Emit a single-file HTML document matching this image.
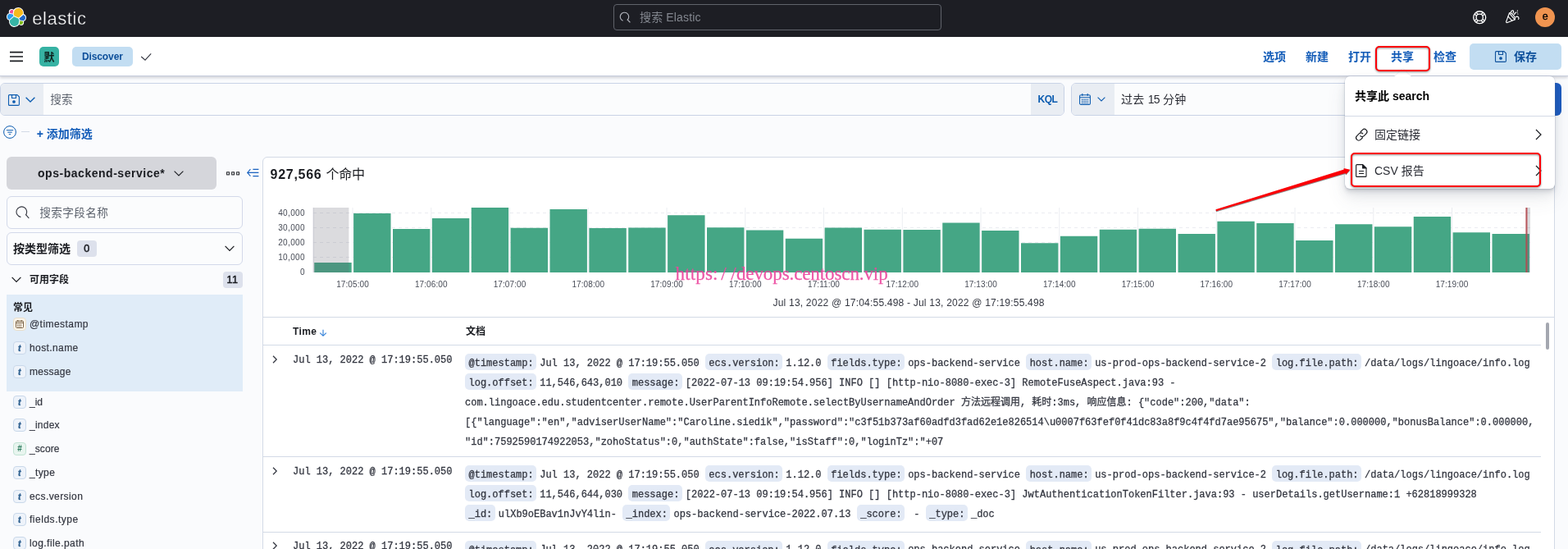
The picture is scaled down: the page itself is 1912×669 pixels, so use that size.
<!DOCTYPE html>
<html lang="zh-CN"><head><meta charset="utf-8"><title>Discover - Elastic</title>
<style>
*{box-sizing:border-box;margin:0;padding:0}
html,body{width:1912px;height:669px;overflow:hidden;background:#fafbfd;font-family:"Liberation Sans","Noto Sans CJK SC",sans-serif;color:#343741;font-size:14px}
#root{will-change:transform;position:relative;width:1912px;height:669px;overflow:hidden;background:#fafbfd}
.abs{position:absolute}
.t{position:absolute;white-space:nowrap;line-height:1}
.b{font-weight:700}
svg{position:absolute;overflow:visible}
#hdr1{left:0;top:0;width:1912px;height:45px;background:#1d1e24}
#hdr2{left:0;top:44.5px;width:1912px;height:48px;background:#fff;border-bottom:1px solid #c6ccdb;box-shadow:0 2px 3px rgba(110,115,130,.28)}
.nav{color:#135cb8;font-weight:700;font-size:14px;top:62px}
.fld{font-size:12px;color:#343741;left:36px;-webkit-text-stroke:.2px #343741}
.tok{position:absolute;left:16px;width:16px;height:16px;border-radius:4px;border:1px solid #c9d8ea;background:#eef3fa;color:#2d5f8f;font:italic 700 10.500px/14.300px "Liberation Sans",sans-serif;text-align:center;text-indent:-.5px;-webkit-text-stroke:.3px #2d5f8f}
.doc{position:absolute;left:567px;-webkit-text-stroke:.28px #343741;font:12px/24px "Liberation Mono","Noto Sans CJK SC",monospace;color:#343741;white-space:pre}
.doc b{font-weight:400;background:#e3eaf6;padding:4.700px 3.500px 1.200px 4.500px;margin-right:4px;border-radius:5px}
.rt{position:absolute;left:357px;-webkit-text-stroke:.28px #343741;font:12px/24px "Liberation Mono","Noto Sans CJK SC",monospace;color:#343741;white-space:pre}
.hl{position:absolute;height:1px;background:#d3dae6}
.ax{font-size:10px;color:#484c57;letter-spacing:.1px}
.ay{letter-spacing:.38px}
.red{position:absolute;border:2.200px solid #fb0007;border-radius:5px;filter:drop-shadow(.8px 1.300px 1px rgba(0,0,0,.45))}
</style></head>
<body><div id="root">
<div id="hdr1" class="abs">
  <svg style="left:8px;top:9px" width="24" height="24" viewBox="0 0 32 32">
    <path fill="#FFF" d="M32 16.77a6.334 6.334 0 0 0-4.188-5.965 9.1 9.1 0 0 0 .161-1.71c0-5.027-4.09-9.095-9.095-9.095a9.066 9.066 0 0 0-7.365 3.758 4.828 4.828 0 0 0-2.957-1.009 4.833 4.833 0 0 0-4.828 4.828c0 .571.104 1.13.284 1.648A6.361 6.361 0 0 0 0 15.169c0 2.68 1.667 5.027 4.188 5.965-.102.56-.16 1.13-.16 1.71 0 5.005 4.067 9.073 9.072 9.073a9.044 9.044 0 0 0 7.365-3.77 4.786 4.786 0 0 0 2.957 1.021 4.833 4.833 0 0 0 4.828-4.828c0-.571-.104-1.13-.284-1.648A6.35 6.35 0 0 0 32 16.77"/>
    <path fill="#f7ba1c" d="M12.58 13.787l7.002 3.211 7.066-6.213a7.849 7.849 0 0 0 .152-1.557c0-4.287-3.487-7.775-7.775-7.775a7.769 7.769 0 0 0-6.415 3.394l-1.177 6.1 1.147 2.84z"/>
    <path fill="#36b3a5" d="M5.332 21.164a7.97 7.97 0 0 0-.15 1.58c0 4.3 3.497 7.797 7.798 7.797a7.772 7.772 0 0 0 6.435-3.412l1.166-6.076-1.557-2.975-7.029-3.203-6.663 6.289z"/>
    <path fill="#ee4d96" d="M5.288 9.067l4.8 1.134L11.14 4.74a3.785 3.785 0 0 0-2.287-.773 3.805 3.805 0 0 0-3.565 5.1"/>
    <path fill="#2f9ff0" d="M4.872 10.21c-2.136.707-3.63 2.756-3.63 5.016a5.263 5.263 0 0 0 3.392 4.923l6.734-6.087-1.237-2.641-5.26-1.211z"/>
    <path fill="#7fbb1d" d="M20.874 27.129a3.78 3.78 0 0 0 2.279.777 3.805 3.805 0 0 0 3.567-5.1l-4.797-1.123-1.05 5.446z"/>
    <path fill="#1f66c8" d="M21.85 20.563l5.28 1.234c2.145-.708 3.63-2.756 3.63-5.019a5.25 5.25 0 0 0-3.4-4.912l-6.906 6.05 1.395 2.647z"/>
  </svg>
  <div class="t" id="wordmark" style="left:39.300px;top:11.500px;font-size:22px;color:#fff;letter-spacing:.55px;-webkit-text-stroke:.35px #1d1e24">elastic</div>
  <div class="abs" style="left:748px;top:5px;width:400px;height:32px;border:1px solid #60636b;border-radius:4px;background:#1d1e24"></div>
  <svg style="left:755px;top:14px" width="14" height="14" viewBox="0 0 14 14" fill="none" stroke="#b4b7bf" stroke-width="1.100" stroke-linecap="round"><path d="M10.200 10.100A5.200 5.200 0 1 0 4.200 11.100"/><path d="M10.200 10.100L13.100 13"/></svg>
  <div class="t" style="left:780px;top:14px;font-size:14px;color:#83878f;letter-spacing:.15px">搜索 Elastic</div>
  <svg style="left:1795.800px;top:12.700px" width="16.400" height="16.400" viewBox="0 0 16 16" fill="none" stroke="#fff" stroke-width="1.300"><circle cx="8" cy="8" r="7.300"/><circle cx="8" cy="8" r="4"/><path d="M9.900 11.700l2.300 2.300M11.700 9.900l2.300 2.300M6.100 11.700l-2.300 2.300M4.300 9.900l-2.300 2.300M9.900 4.300l2.300-2.300M11.700 6.100l2.300-2.300M6.100 4.300l-2.300-2.300M4.300 6.100l-2.300-2.300"/></svg>
  <svg style="left:1835.800px;top:12.400px" width="16.400" height="16.400" viewBox="0 0 16 16" fill="none" stroke="#fff" stroke-width="1.150" stroke-linejoin="round" stroke-linecap="round"><path d="M4.400 3.800L.7 13.800c-.3.900.4 1.600 1.300 1.300l8.700-3.400"/><path d="M4.400 3.800c1.200-.7 3.200.6 4.800 2.600s2.400 4.300 1.500 5.300"/><path d="M2.900 8l4.800 4.800M5 4.800l5.200 6"/><path d="M6.300 2.800c.2-1.400 1.300-2.300 2.300-2s1 1.700.2 3"/><path d="M11.800 8.700c1.100-.9 2.600-.9 3.300-.1s.6 1.900.1 2.500"/><path d="M10.300 5.300l1.600-2.200" stroke-width="1.300"/><path d="M14 .9v.2M13.600 3.100h.2M14.500 5h.1" stroke-width="1.100"/></svg>
  <div class="abs" style="left:1871.800px;top:8.800px;width:24.400px;height:24.400px;border-radius:50%;background:#f09450"></div>
  <div class="t" style="left:1880.700px;top:14.200px;font-size:12.500px;color:#000;-webkit-text-stroke:.35px #000">e</div>
</div>
<div id="hdr2" class="abs"></div>
<svg style="left:12px;top:62px" width="16" height="14" viewBox="0 0 16 14" stroke="#1a1c21" stroke-width="1.700" fill="none"><path d="M0 1.600h16M0 7h16M0 12.400h16"/></svg>
<div class="abs" style="left:48px;top:57px;width:24px;height:24px;border-radius:5px;background:#36b2a3"></div>
<div class="t b" style="left:53.500px;top:62.500px;font-size:13px;color:#0d1f1c">默</div>
<div class="abs" style="left:88px;top:57px;width:74px;height:24px;border-radius:5px;background:#c2ddf2"></div>
<div class="t b" id="discover" style="left:100px;top:63px;font-size:12px;color:#0d4f9a;letter-spacing:-.12px">Discover</div>
<svg style="left:171px;top:63px" width="14" height="12" viewBox="0 0 14 12" fill="none" stroke="#343741" stroke-width="1.1"><path d="M1.200 6L6 10.200 13.200 2.300"/></svg>
<div class="t nav" style="left:1540px">选项</div>
<div class="t nav" style="left:1592px">新建</div>
<div class="t nav" style="left:1644px">打开</div>
<div class="t nav" style="left:1696px">共享</div>
<div class="t nav" style="left:1748px">检查</div>
<div class="abs" style="left:1792px;top:53px;width:112px;height:32px;border-radius:5px;background:#c2ddf2"></div>
<svg style="left:1823px;top:62px" width="14" height="14" viewBox="0 0 14 14" fill="none" stroke="#0f519c" stroke-width="1.1" stroke-linejoin="round"><path d="M1.500.600h9.500l2.400 2.400v9.200a1.200 1.200 0 0 1-1.200 1.200h-10.700a1 1 0 0 1-1-1v-10.800a1 1 0 0 1 1-1z"/><path d="M4.500.800v3.700h5v-3.700"/><circle cx="7" cy="9" r="1.300" fill="#0c5cb0"/></svg>
<div class="t nav" style="left:1846px;color:#0f519c">保存</div>

<div class="abs" style="left:0;top:101px;width:1298px;height:40px;border:1px solid #c9d3e6;border-radius:6px;background:#fbfcfd;overflow:hidden">
  <div class="abs" style="left:0;top:0;width:51.800px;height:38px;background:#e9edf3"></div>
  <div class="abs" style="right:0;top:0;width:39.800px;height:38px;background:#e9edf3"></div>
</div>
<svg style="left:10px;top:115px" width="14" height="14" viewBox="0 0 14 14" fill="none" stroke="#0c5cb0" stroke-width="1.1" stroke-linejoin="round"><path d="M1.500.600h9.500l2.400 2.400v9.200a1.200 1.200 0 0 1-1.200 1.200h-10.700a1 1 0 0 1-1-1v-10.800a1 1 0 0 1 1-1z"/><path d="M4.500.800v3.700h5v-3.700"/><circle cx="7" cy="9" r="1.300" fill="#0c5cb0"/></svg>
<svg style="left:31px;top:118px" width="12" height="7" viewBox="0 0 12 7" fill="none" stroke="#0c5cb0" stroke-width="1.300"><path d="M.600.800L6 6l5.400-5.200"/></svg>
<div class="t" style="left:61.300px;top:114.700px;font-size:13.600px;color:#5d636e">搜索</div>
<div class="t b" style="left:1265.500px;top:115px;font-size:12px;color:#0c5cb0;letter-spacing:-.5px">KQL</div>
<div class="abs" style="left:1306px;top:101px;width:580px;height:40px;border:1px solid #c9d3e6;border-radius:6px;background:#fbfcfd;overflow:hidden">
  <div class="abs" style="left:0;top:0;width:52px;height:38px;background:#e9edf3"></div>
</div>
<svg style="left:1316px;top:114px" width="14" height="14" viewBox="0 0 14 14" fill="none" stroke="#0c5cb0" stroke-width="1.1"><rect x=".6" y="1.800" width="12.800" height="11.600" rx="1.500"/><path d="M.6 4.800h12.800M3.800 0v3M10.200 0v3"/><path d="M3 7.300h8M3 9.300h8M3 11.300h8" stroke-dasharray="1.300 1" stroke-width="1.200"/></svg>
<svg style="left:1338px;top:118px" width="10" height="6" viewBox="0 0 10 6" fill="none" stroke="#0c5cb0" stroke-width="1.1"><path d="M.600.700L5 5l4.400-4.300"/></svg>
<div class="t" style="left:1367px;top:114px;font-size:14px;color:#2a2c34;letter-spacing:.25px">过去 <span style="letter-spacing:-.7px">15</span> 分钟</div>
<div class="abs" style="left:1880px;top:101px;width:24px;height:40px;border-radius:6px;background:#1d5bbf"></div>
<svg style="left:4px;top:153px" width="16" height="16" viewBox="0 0 16 16" fill="none" stroke="#0c5cb0" stroke-width="1"><circle cx="8" cy="8" r="7.400"/><path d="M3.800 5.700h8.400M5.300 8.200h5.400M6.800 10.700h2.400"/></svg>
<div class="abs" style="left:26px;top:160px;width:10px;height:1px;background:#d3dae6"></div>
<div class="t b" style="left:44.800px;top:156px;font-size:14px;color:#135cb8">+ 添加筛选</div>

<div class="abs" style="left:8px;top:191px;width:256px;height:40px;border-radius:6px;background:#d5d6db"></div>
<div class="t b" id="ipat" style="left:46px;top:204px;font-size:14px;color:#1a1c21;letter-spacing:.53px">ops-backend-service*</div>
<svg style="left:212px;top:208px" width="12" height="7" viewBox="0 0 12 7" fill="none" stroke="#1a1c21" stroke-width="1.1"><path d="M.600.700L6 6l5.400-5.300"/></svg>
<svg style="left:276px;top:208.500px" width="16" height="5" viewBox="0 0 16 5" fill="none" stroke="#1a1c21" stroke-width="1"><rect x=".6" y=".8" width="2.800" height="3.100"/><rect x="6.700" y=".8" width="2.800" height="3.100"/><rect x="12.700" y=".8" width="2.800" height="3.100"/></svg>
<svg style="left:301px;top:205px" width="15" height="11" viewBox="0 0 15 11" fill="none" stroke="#1a62c0" stroke-width="1.100"><path d="M4.400 1.200L.7 5.400l3.700 4.200M.8 5.400h13.600M7.400 1.400h7M7.400 9.600h7"/></svg>
<div class="abs" style="left:8px;top:239px;width:288px;height:40px;border:1px solid #d3d9ea;border-radius:6px;background:#fbfcfd"></div>
<svg style="left:20px;top:251px" width="16" height="16" viewBox="0 0 16 16" fill="none" stroke="#343741" stroke-width="1.1" stroke-linecap="round"><path d="M11.600 10.700A6.300 6.300 0 1 0 5 13.400"/><path d="M11.600 10.700L15 14.600"/></svg>
<div class="t" style="left:48.300px;top:253px;font-size:13.600px;color:#5d636e;letter-spacing:.4px">搜索字段名称</div>
<div class="abs" style="left:8px;top:283px;width:288px;height:40px;border:1px solid #d3d9ea;border-radius:6px;background:#fbfcfd"></div>
<div class="t b" style="left:16px;top:296px;font-size:14px;color:#1a1c21">按类型筛选</div>
<div class="abs" style="left:94px;top:293px;width:24px;height:20px;border-radius:4px;background:#dde1ec"></div>
<div class="t" style="left:102.200px;top:296.800px;font-size:12.500px;color:#1a1c21;-webkit-text-stroke:.5px #1a1c21">0</div>
<svg style="left:274px;top:299px" width="12" height="8" viewBox="0 0 12 8" fill="none" stroke="#1a1c21" stroke-width="1.200"><path d="M.600.900L6 6.400l5.400-5.500"/></svg>
<svg style="left:14px;top:337px" width="12" height="8" viewBox="0 0 12 8" fill="none" stroke="#1a1c21" stroke-width="1.200"><path d="M.600.900L6 6.400l5.400-5.500"/></svg>
<div class="t b" style="left:36px;top:334.500px;font-size:12px;color:#1a1c21">可用字段</div>
<div class="abs" style="left:272px;top:331px;width:24px;height:20px;border-radius:4px;background:#dde1ec"></div>
<div class="t" style="left:276.500px;top:334.800px;font-size:12.500px;color:#1a1c21;letter-spacing:.6px;-webkit-text-stroke:.5px #1a1c21">11</div>
<div class="abs" style="left:8px;top:359px;width:288px;height:118px;background:#e0ecf8"></div>
<div class="t b" style="left:16px;top:368.500px;font-size:12px;color:#1a1c21">常见</div>
<div class="abs tok" style="top:387px;background:#fbf5ea;border-color:#e9dfcb"></div>
<svg style="left:19px;top:390px" width="10" height="10" viewBox="0 0 10 10" fill="none" stroke="#6b5234" stroke-width=".9"><rect x=".5" y="1.200" width="9" height="8.300" rx="1"/><path d="M.5 3.300h9M2.800 0v2M7.200 0v2"/><path d="M2.200 5.200h5.600M2.200 6.600h5.600M2.200 8h5.600" stroke-dasharray="1 .9" stroke-width=".9"/></svg>
<div class="t fld" style="top:388.500px;letter-spacing:0.44px">@timestamp</div>
<div class="tok" style="top:416px">t</div><div class="t fld" style="top:417.500px;letter-spacing:0.4px">host.name</div>
<div class="tok" style="top:445px">t</div><div class="t fld" style="top:446.500px;letter-spacing:0.3px">message</div>
<div class="tok" style="top:482px">t</div><div class="t fld" style="top:483.500px;letter-spacing:0px">_id</div>
<div class="tok" style="top:510px">t</div><div class="t fld" style="top:511.500px;letter-spacing:0.25px">_index</div>
<div class="tok" style="top:539px;background:#e8f5ef;border-color:#c2e3d4;color:#2a7a5c;font:700 10px/14px 'Liberation Sans',sans-serif;text-indent:0;-webkit-text-stroke:0">#</div><div class="t fld" style="top:540.500px;letter-spacing:0.1px">_score</div>
<div class="tok" style="top:568px">t</div><div class="t fld" style="top:569.500px;letter-spacing:0.37px">_type</div>
<div class="tok" style="top:597px">t</div><div class="t fld" style="top:598.500px;letter-spacing:0.42px">ecs.version</div>
<div class="tok" style="top:625px">t</div><div class="t fld" style="top:626.500px;letter-spacing:0.52px">fields.type</div>
<div class="tok" style="top:654px">t</div><div class="t fld" style="top:655.500px;letter-spacing:0.44px">log.file.path</div>

<div class="abs" id="panel" style="left:320px;top:191px;width:1576px;height:500px;border:1px solid #d3dae6;border-radius:6px;background:#fff"></div>
<div class="t b" style="left:329.500px;top:205.200px;font-size:16px;color:#1a1c21;letter-spacing:.73px">927,566</div>
<div class="t" style="left:397.500px;top:205.200px;font-size:16px;color:#1a1c21;letter-spacing:-.2px">个命中</div>
<svg style="left:0;top:0" width="1912" height="669" viewBox="0 0 1912 669">
<path d="M382 259.5H1866" stroke="#ebecf1" stroke-width="1" stroke-dasharray="4 4" fill="none"/>
<path d="M382 277.5H1866" stroke="#ebecf1" stroke-width="1" stroke-dasharray="4 4" fill="none"/>
<path d="M382 295.5H1866" stroke="#ebecf1" stroke-width="1" stroke-dasharray="4 4" fill="none"/>
<path d="M382 313.5H1866" stroke="#ebecf1" stroke-width="1" stroke-dasharray="4 4" fill="none"/>
<path d="M430.00 253V332" stroke="#eceef2" stroke-width="1" fill="none"/>
<path d="M525.75 253V332" stroke="#eceef2" stroke-width="1" fill="none"/>
<path d="M621.50 253V332" stroke="#eceef2" stroke-width="1" fill="none"/>
<path d="M717.25 253V332" stroke="#eceef2" stroke-width="1" fill="none"/>
<path d="M813.00 253V332" stroke="#eceef2" stroke-width="1" fill="none"/>
<path d="M908.75 253V332" stroke="#eceef2" stroke-width="1" fill="none"/>
<path d="M1004.50 253V332" stroke="#eceef2" stroke-width="1" fill="none"/>
<path d="M1100.25 253V332" stroke="#eceef2" stroke-width="1" fill="none"/>
<path d="M1196.00 253V332" stroke="#eceef2" stroke-width="1" fill="none"/>
<path d="M1291.75 253V332" stroke="#eceef2" stroke-width="1" fill="none"/>
<path d="M1387.50 253V332" stroke="#eceef2" stroke-width="1" fill="none"/>
<path d="M1483.25 253V332" stroke="#eceef2" stroke-width="1" fill="none"/>
<path d="M1579.00 253V332" stroke="#eceef2" stroke-width="1" fill="none"/>
<path d="M1674.75 253V332" stroke="#eceef2" stroke-width="1" fill="none"/>
<path d="M1770.50 253V332" stroke="#eceef2" stroke-width="1" fill="none"/>
<rect x="383.25" y="320" width="45.4" height="12.00" fill="#45a685"/>
<rect x="431.12" y="260" width="45.4" height="72.00" fill="#45a685"/>
<rect x="479.00" y="279" width="45.4" height="53.00" fill="#45a685"/>
<rect x="526.88" y="266" width="45.4" height="66.00" fill="#45a685"/>
<rect x="574.75" y="253" width="45.4" height="79.00" fill="#45a685"/>
<rect x="622.62" y="277.75" width="45.4" height="54.25" fill="#45a685"/>
<rect x="670.50" y="255" width="45.4" height="77.00" fill="#45a685"/>
<rect x="718.38" y="278" width="45.4" height="54.00" fill="#45a685"/>
<rect x="766.25" y="277.5" width="45.4" height="54.50" fill="#45a685"/>
<rect x="814.12" y="262.25" width="45.4" height="69.75" fill="#45a685"/>
<rect x="862.00" y="277.25" width="45.4" height="54.75" fill="#45a685"/>
<rect x="909.88" y="280.5" width="45.4" height="51.50" fill="#45a685"/>
<rect x="957.75" y="290.75" width="45.4" height="41.25" fill="#45a685"/>
<rect x="1005.62" y="277.5" width="45.4" height="54.50" fill="#45a685"/>
<rect x="1053.50" y="279.75" width="45.4" height="52.25" fill="#45a685"/>
<rect x="1101.38" y="280" width="45.4" height="52.00" fill="#45a685"/>
<rect x="1149.25" y="271.5" width="45.4" height="60.50" fill="#45a685"/>
<rect x="1197.12" y="281" width="45.4" height="51.00" fill="#45a685"/>
<rect x="1245.00" y="296.25" width="45.4" height="35.75" fill="#45a685"/>
<rect x="1292.88" y="287.75" width="45.4" height="44.25" fill="#45a685"/>
<rect x="1340.75" y="279.75" width="45.4" height="52.25" fill="#45a685"/>
<rect x="1388.62" y="278.75" width="45.4" height="53.25" fill="#45a685"/>
<rect x="1436.50" y="285" width="45.4" height="47.00" fill="#45a685"/>
<rect x="1484.38" y="269.75" width="45.4" height="62.25" fill="#45a685"/>
<rect x="1532.25" y="272" width="45.4" height="60.00" fill="#45a685"/>
<rect x="1580.12" y="293" width="45.4" height="39.00" fill="#45a685"/>
<rect x="1628.00" y="273.25" width="45.4" height="58.75" fill="#45a685"/>
<rect x="1675.88" y="276.25" width="45.4" height="55.75" fill="#45a685"/>
<rect x="1723.75" y="264" width="45.4" height="68.00" fill="#45a685"/>
<rect x="1771.62" y="283.25" width="45.4" height="48.75" fill="#45a685"/>
<rect x="1819.50" y="285" width="45.4" height="47.00" fill="#45a685"/>
<rect x="382" y="253" width="43.400" height="79" fill="rgb(100,100,112)" opacity=".23"/>
<rect x="381.700" y="253" width=".8" height="79" fill="#b9bcc6" opacity=".8"/>
<rect x="1862.300" y="253" width="3.700" height="79" fill="rgb(100,100,112)" opacity=".23"/>
<rect x="1860.400" y="253" width="2.100" height="79" fill="#b24a50" opacity=".92"/>
</svg>
<div class="t ax ay" style="right:1540px;top:255.1px">40,000</div>
<div class="t ax ay" style="right:1540px;top:273.1px">30,000</div>
<div class="t ax ay" style="right:1540px;top:291.1px">20,000</div>
<div class="t ax ay" style="right:1540px;top:309.1px">10,000</div>
<div class="t ax ay" style="right:1540px;top:327.1px">0</div>
<div class="t ax" style="left:400.00px;width:60px;text-align:center;top:341.500px">17:05:00</div>
<div class="t ax" style="left:495.75px;width:60px;text-align:center;top:341.500px">17:06:00</div>
<div class="t ax" style="left:591.50px;width:60px;text-align:center;top:341.500px">17:07:00</div>
<div class="t ax" style="left:687.25px;width:60px;text-align:center;top:341.500px">17:08:00</div>
<div class="t ax" style="left:783.00px;width:60px;text-align:center;top:341.500px">17:09:00</div>
<div class="t ax" style="left:878.75px;width:60px;text-align:center;top:341.500px">17:10:00</div>
<div class="t ax" style="left:974.50px;width:60px;text-align:center;top:341.500px">17:11:00</div>
<div class="t ax" style="left:1070.25px;width:60px;text-align:center;top:341.500px">17:12:00</div>
<div class="t ax" style="left:1166.00px;width:60px;text-align:center;top:341.500px">17:13:00</div>
<div class="t ax" style="left:1261.75px;width:60px;text-align:center;top:341.500px">17:14:00</div>
<div class="t ax" style="left:1357.50px;width:60px;text-align:center;top:341.500px">17:15:00</div>
<div class="t ax" style="left:1453.25px;width:60px;text-align:center;top:341.500px">17:16:00</div>
<div class="t ax" style="left:1549.00px;width:60px;text-align:center;top:341.500px">17:17:00</div>
<div class="t ax" style="left:1644.75px;width:60px;text-align:center;top:341.500px">17:18:00</div>
<div class="t ax" style="left:1740.50px;width:60px;text-align:center;top:341.500px">17:19:00</div>
<div class="t" id="range" style="left:942.500px;top:362.700px;font-size:12px;color:#343741;letter-spacing:.21px">Jul 13, 2022 @ 17:04:55.498 - Jul 13, 2022 @ 17:19:55.498</div>
<div class="hl" style="left:321px;top:386px;width:1574px"></div>

<div class="t b" style="left:357px;top:398px;font-size:12px;color:#1a1c21;letter-spacing:.35px">Time</div>
<svg style="left:388.750px;top:400.500px" width="10" height="10" viewBox="0 0 10 10" fill="none" stroke="#2f7fd8" stroke-width="1.100"><path d="M5 .8v7.300M1.200 4.600L5 8.300l3.800-3.700"/></svg>
<div class="t b" style="left:568px;top:398px;font-size:12px;color:#1a1c21">文档</div>
<div class="hl" style="left:321px;top:420px;width:1558px"></div>
<div class="hl" style="left:321px;top:556px;width:1558px"></div>
<div class="hl" style="left:321px;top:647.600px;width:1558px"></div>
<div class="abs" style="left:1885px;top:393px;width:3.800px;height:33px;border-radius:2px;background:#a4a7b0"></div>
<svg style="left:332px;top:432.75px" width="6" height="10" viewBox="0 0 6 10" fill="none" stroke="#343741" stroke-width="1.250"><path d="M1 .7L5.200 5 1 9.300"/></svg>
<div class="rt" style="top:426.75px">Jul 13, 2022 @ 17:19:55.050</div>
<div class="doc" style="top:430.75px"><b>@timestamp:</b>Jul 13, 2022 @ 17:19:55.050 <b>ecs.version:</b>1.12.0 <b>fields.type:</b>ops-backend-service <b>host.name:</b>us-prod-ops-backend-service-2 <b>log.file.path:</b>/data/logs/lingoace/info.log
<b>log.offset:</b>11,546,643,010 <b>message:</b>[2022-07-13 09:19:54.956] INFO [] [http-nio-8080-exec-3] RemoteFuseAspect.java:93 -
com.lingoace.edu.studentcenter.remote.UserParentInfoRemote.selectByUsernameAndOrder 方法远程调用, 耗时:3ms, 响应信息: {"code":200,"data":
[{"language":"en","adviserUserName":"Caroline.siedik","password":"c3f51b373af60adfd3fad62e1e826514\u0007f63fef0f41dc83a8f9c4f4fd7ae95675","balance":0.000000,"bonusBalance":0.000000,
"id":7592590174922053,"zohoStatus":0,"authState":false,"isStaff":0,"loginTz":"+07</div>
<svg style="left:332px;top:568.75px" width="6" height="10" viewBox="0 0 6 10" fill="none" stroke="#343741" stroke-width="1.250"><path d="M1 .7L5.200 5 1 9.300"/></svg>
<div class="rt" style="top:562.75px">Jul 13, 2022 @ 17:19:55.050</div>
<div class="doc" style="top:566.75px"><b>@timestamp:</b>Jul 13, 2022 @ 17:19:55.050 <b>ecs.version:</b>1.12.0 <b>fields.type:</b>ops-backend-service <b>host.name:</b>us-prod-ops-backend-service-2 <b>log.file.path:</b>/data/logs/lingoace/info.log
<b>log.offset:</b>11,546,644,030 <b>message:</b>[2022-07-13 09:19:54.956] INFO [] [http-nio-8080-exec-3] JwtAuthenticationTokenFilter.java:93 - userDetails.getUsername:1 +62818999328
<b>_id:</b>ulXb9oEBav1nJvY4lin- <b>_index:</b>ops-backend-service-2022.07.13 <b>_score:</b> - <b>_type:</b>_doc</div>
<svg style="left:332px;top:660.25px" width="6" height="10" viewBox="0 0 6 10" fill="none" stroke="#343741" stroke-width="1.250"><path d="M1 .7L5.200 5 1 9.300"/></svg>
<div class="rt" style="top:654.25px">Jul 13, 2022 @ 17:19:55.050</div>
<div class="doc" style="top:658.25px"><b>@timestamp:</b>Jul 13, 2022 @ 17:19:55.050 <b>ecs.version:</b>1.12.0 <b>fields.type:</b>ops-backend-service <b>host.name:</b>us-prod-ops-backend-service-2 <b>log.file.path:</b>/data/logs/lingoace/info.log</div>

<div class="t" id="wm" style="left:823.500px;top:322px;font-family:'Liberation Serif',serif;font-size:23px;color:#ec489f;opacity:.92;letter-spacing:-.1px;-webkit-text-stroke:.25px #ec489f"><span style="letter-spacing:.15px">https:</span><span style="margin-left:3.800px;letter-spacing:5.400px">/</span><span style="letter-spacing:.4px">/</span>devops.centoscn.vip</div>
<div class="abs" id="pop" style="left:1639.800px;top:93px;width:256.200px;height:136.500px;border-radius:6px;background:#fff;box-shadow:0 12px 24px 0 rgba(65,78,101,.1),0 6px 12px 0 rgba(65,78,101,.1),0 4px 4px 0 rgba(65,78,101,.1),0 2px 2px 0 rgba(65,78,101,.1),0 0 0 .6px rgba(150,160,185,.25)"></div>
<svg style="left:1699.500px;top:83px" width="21" height="10.500" viewBox="0 0 21 10.500"><path d="M0 10.500L10.500 0l10.500 10.500z" fill="#fff"/><path d="M0 10.500L10.500 0l10.500 10.500" fill="none" stroke="#e6e9f0" stroke-width=".7"/></svg>
<div class="t b" style="left:1652px;top:110px;font-size:14px;color:#000">共享此 search</div>
<div class="hl" style="left:1640px;top:141px;width:256px"></div>
<svg style="left:1651.500px;top:155.500px" width="16.500" height="16.500" viewBox="0 0 16 16" fill="none" stroke="#1a1c21" stroke-width="1.150" stroke-linecap="round"><path d="M6.800 4.600l2.300-2.300a3.100 3.100 0 0 1 4.400 4.400l-2.600 2.600a3.100 3.100 0 0 1-4.400 0"/><path d="M9.200 11.400l-2.300 2.300a3.100 3.100 0 0 1-4.400-4.400l2.600-2.600a3.100 3.100 0 0 1 4.400 0"/></svg>
<div class="t" style="left:1676px;top:157px;font-size:14px;color:#2a2c34">固定链接</div>
<svg style="left:1872px;top:157px" width="8" height="14" viewBox="0 0 8 14" fill="none" stroke="#1a1c21" stroke-width="1.200"><path d="M1 1l6 6-6 6"/></svg>
<svg style="left:1653px;top:200px" width="14" height="16" viewBox="0 0 14 16" fill="none" stroke="#1a1c21" stroke-width="1.100" stroke-linejoin="round"><path d="M1.600.600h7l4.400 4.400v9.400a1 1 0 0 1-1 1h-10.400a1 1 0 0 1-1-1v-12.800a1 1 0 0 1 1-1z"/><path d="M8.600.600v4.400h4.400z" fill="#1a1c21"/><path d="M4 8.500h6M4 11.500h6"/></svg>
<div class="t" style="left:1676px;top:201px;font-size:14px;color:#2a2c34;letter-spacing:0">CSV 报告</div>
<svg style="left:1872px;top:201px" width="8" height="14" viewBox="0 0 8 14" fill="none" stroke="#1a1c21" stroke-width="1.200"><path d="M1 1l6 6-6 6"/></svg>
<div class="red" style="left:1677px;top:56px;width:67.300px;height:31px"></div>
<div class="red" style="left:1647px;top:186px;width:232.200px;height:41.600px"></div>
<svg style="left:0;top:0" width="1912" height="669" viewBox="0 0 1912 669"><path d="M1482.400 255.300L1638.900 206.400 1638.500 204.900 1646.400 206.800 1641.200 212.600 1640.500 211 1483.100 257.200z" fill="#fb0007" style="filter:drop-shadow(.7px 1.100px .6px rgba(0,0,0,.45))"/></svg>

</div></body></html>
